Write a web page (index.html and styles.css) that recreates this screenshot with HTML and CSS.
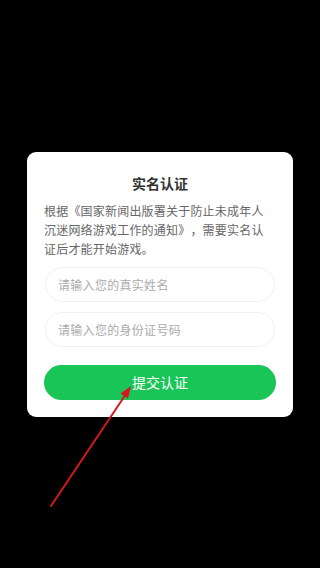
FILE: index.html
```html
<!DOCTYPE html>
<html lang="zh">
<head>
<meta charset="utf-8">
<link rel="stylesheet" href="styles.css">
</head>
<body>
<div class="screen">
  <div class="card">
    <div class="title">实名认证</div>
    <p class="desc">根据《国家新闻出版署关于防止未成年人沉迷网络游戏工作的通知》，需要实名认证后才能开始游戏。</p>
    <div class="field">请输入您的真实姓名</div>
    <div class="field field-second">请输入您的身份证号码</div>
    <div class="btn">提交认证</div>
  </div>
  <svg class="arrow" width="320" height="568" viewBox="0 0 320 568">
    <line x1="51" y1="506" x2="126" y2="394" stroke="#d8161c" stroke-width="2" stroke-linecap="round"/>
    <polygon points="131,386 128,398.5 120.5,393.5" fill="#d8161c"/>
  </svg>
</div>
</body>
</html>
```
FILE: styles.css
```css
html, body {
  margin: 0;
  padding: 0;
  background: #000;
}
.screen {
  position: relative;
  width: 320px;
  height: 568px;
  display: flex;
  align-items: center;
  justify-content: center;
  font-family: "Noto Sans CJK SC", "Noto Sans", sans-serif;
}
.card {
  width: 266px;
  box-sizing: border-box;
  background: #fff;
  border-radius: 9px;
  padding: 21px 17px 17px 17px;
  display: flex;
  flex-direction: column;
}
.title {
  text-align: center;
  font-size: 14px;
  line-height: 20px;
  font-weight: 700;
  color: #333;
}
.desc {
  margin: 8.5px 0 0 0;
  font-size: 12px;
  letter-spacing: 0.2px;
  line-height: 19px;
  color: #666;
  width: 222px;
  text-spacing-trim: space-all;
}
.field {
  margin: 8.5px 1px 0 1px;
  height: 35px;
  box-sizing: border-box;
  border: 1px solid #f0f0f0;
  border-radius: 17.5px;
  padding-left: 12px;
  display: flex;
  align-items: center;
  font-size: 12px;
  letter-spacing: 0.3px;
  color: #aaa;
}
.field-second {
  margin-top: 10px;
}
.btn {
  margin-top: 18px;
  height: 35px;
  border-radius: 17.5px;
  background: #1ac558;
  color: #fff;
  font-size: 14px;
  display: flex;
  align-items: center;
  justify-content: center;
}
.arrow {
  position: absolute;
  left: 0;
  top: 0;
  pointer-events: none;
}
```
